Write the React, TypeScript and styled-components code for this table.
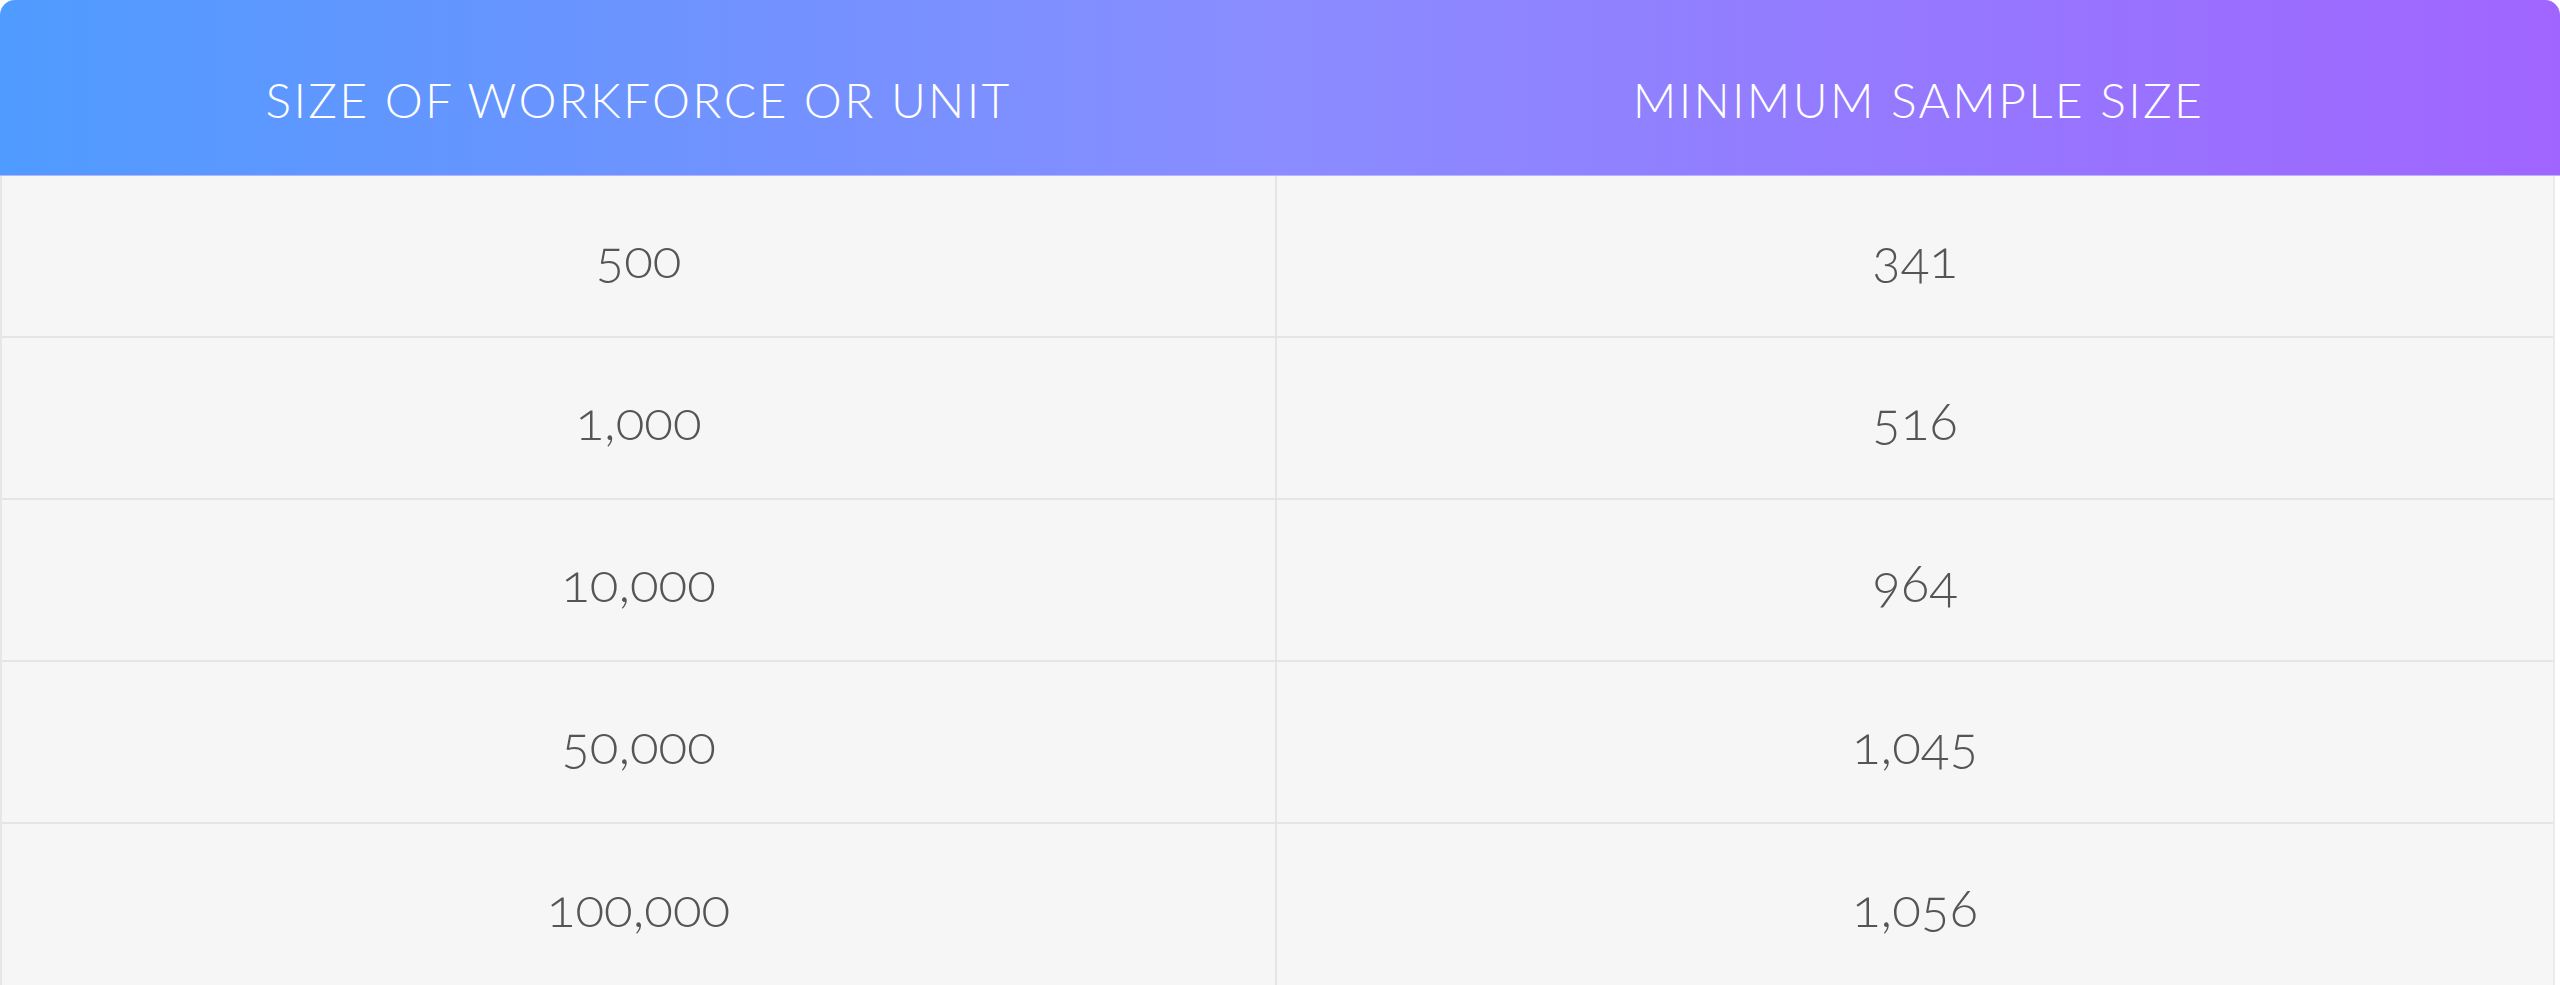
import React from "react";
import styled, { createGlobalStyle } from "styled-components";

const GlobalStyle = createGlobalStyle`
    html, body {
        margin: 0;
        padding: 0;
        background: #ffffff;
    }
    body {
        font-family: Lato, "Open Sans", sans-serif;
    }
`
const Table = styled.div`
    width: 2560px;
    display: flex;
    flex-direction: column;
`
const HeaderRow = styled.div`
    display: grid;
    grid-template-columns: 1277px 1fr;
    height: 176px;
    border-radius: 15px 15px 0 0;
    background: linear-gradient(90deg, #4f9bff 0%, #8a8cff 50%, #a065ff 100%);
    border-bottom: 1px solid #b9b3ff;
    box-sizing: border-box;
`
const HeaderCell = styled.div`
    display: flex;
    align-items: center;
    justify-content: center;
    padding-top: 24px;
    color: #ffffff;
    font-size: 48px;
    font-weight: 300;
    letter-spacing: 2.3px;
    text-transform: uppercase;
`
const Body = styled.div`
    width: 2555px;
    border-left: 2px solid #e6e6e6;
    border-right: 2px solid #ebebeb;
    box-sizing: border-box;
    background: #f6f6f6;
`
const Row = styled.div<{ $last?: boolean }>`
    display: grid;
    grid-template-columns: 1275px 1fr;
    height: 162px;
    box-sizing: border-box;
    border-bottom: ${(p) => (p.$last ? "none" : "2px solid #e5e5e5")};
`
const Cell = styled.div<{ $divider?: boolean }>`
    display: flex;
    align-items: center;
    justify-content: center;
    padding-top: 2px;
    color: #555555;
    font-size: 53px;
    font-weight: 300;
    font-variant-numeric: oldstyle-nums;
    border-right: ${(p) => (p.$divider ? "2px solid #e5e5e5" : "none")};
`

const rows = [
  ["500", "341"],
  ["1,000", "516"],
  ["10,000", "964"],
  ["50,000", "1,045"],
  ["100,000", "1,056"],
];

const App: React.FC = () => {
  return (
    <>
      <GlobalStyle />
      <Table>
        <HeaderRow>
          <HeaderCell>Size of workforce or unit</HeaderCell>
          <HeaderCell>Minimum sample size</HeaderCell>
        </HeaderRow>
        <Body>
          {rows.map((r, i) => (
            <Row key={r[0]} $last={i === rows.length - 1}>
              <Cell $divider>{r[0]}</Cell>
              <Cell>{r[1]}</Cell>
            </Row>
          ))}
        </Body>
      </Table>
    </>
  );
};

export default App;
